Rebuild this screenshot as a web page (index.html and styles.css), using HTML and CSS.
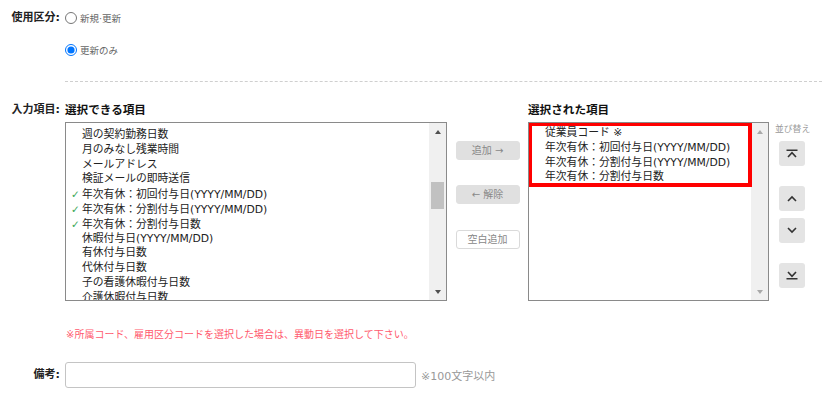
FILE: index.html
```html
<!DOCTYPE html>
<html lang="ja">
<head>
    <meta charset="UTF-8">
    <title>入力項目設定</title>
    <link rel="stylesheet" href="styles.css">
</head>
<body>
    <div class="page">
        <div class="field usage">
            <div class="label">使用区分:</div>
            <div class="options">
                <label class="radio"><input type="radio" name="kubun"> 新規·更新</label>
                <label class="radio"><input type="radio" name="kubun" checked> 更新のみ</label>
            </div>
        </div>

        <div class="dashed"></div>

        <div class="field items">
            <div class="label">入力項目:</div>
            <div class="picker">
                <div class="col col-left">
                    <div class="col-title">選択できる項目</div>
                    <div class="listbox">
                        <ul class="list list-left">
                            <li><span class="mark"></span>週の契約勤務日数</li>
                            <li><span class="mark"></span>月のみなし残業時間</li>
                            <li><span class="mark"></span>メールアドレス</li>
                            <li><span class="mark"></span>検証メールの即時送信</li>
                            <li><span class="mark">✓</span>年次有休：初回付与日(YYYY/MM/DD)</li>
                            <li><span class="mark">✓</span>年次有休：分割付与日(YYYY/MM/DD)</li>
                            <li><span class="mark">✓</span>年次有休：分割付与日数</li>
                            <li><span class="mark"></span>休暇付与日(YYYY/MM/DD)</li>
                            <li><span class="mark"></span>有休付与日数</li>
                            <li><span class="mark"></span>代休付与日数</li>
                            <li><span class="mark"></span>子の看護休暇付与日数</li>
                            <li><span class="mark"></span>介護休暇付与日数</li>
                        </ul>
                        <div class="scrollbar">
                            <span class="arrow up"></span>
                            <div class="track"><div class="thumb"></div></div>
                            <span class="arrow down"></span>
                        </div>
                    </div>
                </div>

                <div class="actions">
                    <button class="btn">追加 →</button>
                    <button class="btn">← 解除</button>
                    <button class="btn btn-white">空白追加</button>
                </div>

                <div class="col col-right">
                    <div class="col-title">選択された項目</div>
                    <div class="listbox">
                        <ul class="list list-right">
                            <li>従業員コード ※</li>
                            <li>年次有休：初回付与日(YYYY/MM/DD)</li>
                            <li>年次有休：分割付与日(YYYY/MM/DD)</li>
                            <li>年次有休：分割付与日数</li>
                        </ul>
                        <div class="scrollbar disabled">
                            <span class="arrow up"></span>
                            <div class="track"></div>
                            <span class="arrow down"></span>
                        </div>
                        <div class="highlight"></div>
                    </div>
                </div>

                <div class="sorter">
                    <div class="sorter-title">並び替え</div>
                    <button class="sort-btn first">
                        <svg width="12" height="9" viewBox="0 0 12 9"><path d="M0.5 1.2H11.5M2 8L6 3.6L10 8" fill="none" stroke="#333" stroke-width="1.6"/></svg>
                    </button>
                    <button class="sort-btn up">
                        <svg width="12" height="7" viewBox="0 0 12 7"><path d="M2 6L6 2L10 6" fill="none" stroke="#333" stroke-width="1.6"/></svg>
                    </button>
                    <button class="sort-btn down">
                        <svg width="12" height="7" viewBox="0 0 12 7"><path d="M2 1L6 5L10 1" fill="none" stroke="#333" stroke-width="1.6"/></svg>
                    </button>
                    <button class="sort-btn last">
                        <svg width="12" height="9" viewBox="0 0 12 9"><path d="M2 1L6 5.4L10 1M0.5 7.8H11.5" fill="none" stroke="#333" stroke-width="1.6"/></svg>
                    </button>
                </div>
            </div>
        </div>

        <p class="note">※所属コード、雇用区分コードを選択した場合は、異動日を選択して下さい。</p>

        <div class="field memo">
            <div class="label">備考:</div>
            <input type="text" class="memo-input">
            <span class="hint">※100文字以内</span>
        </div>
    </div>
</body>
</html>
```

FILE: styles.css
```css
body {
    margin: 0;
    font-family: "DejaVu Sans", "Noto Sans CJK JP", sans-serif;
    color: #222;
    background: #fff;
}
.page {
    padding-top: 11px;
}
.field {
    display: flex;
    align-items: flex-start;
}
.label {
    width: 60px;
    margin-right: 5px;
    text-align: right;
    font-size: 11px;
    font-weight: bold;
    line-height: 14px;
    white-space: nowrap;
    flex-shrink: 0;
}
.options {
    display: flex;
    flex-direction: column;
    gap: 18px;
}
.radio {
    display: flex;
    align-items: center;
    height: 14px;
    font-size: 9.5px;
    color: #666;
}
.radio input {
    width: 12px;
    height: 12px;
    margin: 0 3px 0 0;
}
.dashed {
    margin: 24px 3px 0 65px;
    border-top: 1px dashed #cfcfcf;
}

/* 入力項目 */
.items {
    margin-top: 20px;
}
.items .label {
    line-height: 16px;
}
.picker {
    display: flex;
    align-items: flex-start;
}
.col-title {
    font-size: 11.6px;
    font-weight: bold;
    line-height: 16px;
    margin-bottom: 4px;
    color: #111;
}
.col-left {
    width: 382px;
}
.col-right {
    width: 241px;
}
.listbox {
    position: relative;
    display: flex;
    height: 179px;
    border: 1px solid #8a8a8a;
    box-sizing: border-box;
    overflow: hidden;
    background: #fff;
}
.list {
    flex: 1;
    margin: 0;
    padding: 0;
    list-style: none;
    font-size: 10.8px;
    line-height: 14.8px;
    color: #222;
    white-space: nowrap;
}
.list li {
    height: 14.8px;
}
.list-left {
    padding-top: 5px;
}
.list-right {
    padding-top: 3px;
}
.list-left li {
    padding-left: 5px;
}
.list-right li {
    padding-left: 16px;
}
.mark {
    display: inline-block;
    width: 11px;
    color: #3aa757;
    font-size: 10.5px;
}
.scrollbar {
    display: flex;
    flex-direction: column;
    width: 17px;
    flex-shrink: 0;
    background: #f0f0f0;
}
.arrow {
    height: 17px;
    display: flex;
    align-items: center;
    justify-content: center;
}
.arrow::before {
    content: "";
    border-left: 3.5px solid transparent;
    border-right: 3.5px solid transparent;
}
.arrow.up::before {
    border-bottom: 4px solid #505050;
}
.arrow.down::before {
    border-top: 4px solid #505050;
}
.disabled .arrow.up::before {
    border-bottom-color: #a8a8a8;
}
.disabled .arrow.down::before {
    border-top-color: #a8a8a8;
}
.track {
    flex: 1;
}
.thumb {
    margin: 42px 2px 0;
    height: 27px;
    background: #c1c1c1;
}
.highlight {
    position: absolute;
    left: -1px;
    top: -1px;
    width: 224px;
    height: 65px;
    border: 4px solid #ff0000;
    box-sizing: border-box;
}

/* 追加・解除 */
.actions {
    width: 81px;
    display: flex;
    flex-direction: column;
    align-items: center;
    padding-top: 39px;
}
.btn {
    width: 64px;
    height: 19px;
    padding: 0;
    border: 1px solid #e0e0e0;
    border-radius: 3px;
    background: #e0e0e0;
    color: #888;
    font-family: inherit;
    font-size: 10px;
    line-height: 16px;
    margin-bottom: 25px;
}
.btn-white {
    background: #fff;
    border-color: #dadada;
    margin-top: 1px;
}

/* 並び替え */
.sorter {
    display: flex;
    flex-direction: column;
    padding: 21px 0 0 6px;
}
.sorter-title {
    font-size: 8.8px;
    line-height: 12px;
    color: #999;
    white-space: nowrap;
}
.sort-btn {
    width: 26px;
    height: 25px;
    margin-left: 4px;
    padding: 0;
    border: none;
    border-radius: 3px;
    background: #e4e4e4;
    display: flex;
    align-items: center;
    justify-content: center;
}
.sort-btn.first {
    margin-top: 6px;
}
.sort-btn.up {
    margin-top: 20px;
}
.sort-btn.down {
    margin-top: 7px;
}
.sort-btn.last {
    margin-top: 20px;
}

.note {
    margin: 27px 0 0 66px;
    font-size: 10px;
    line-height: 14px;
    color: #ff5a6e;
}

/* 備考 */
.memo {
    margin-top: 20px;
    align-items: center;
}
.memo .label {
    line-height: 26px;
}
.memo-input {
    width: 351px;
    height: 26px;
    box-sizing: border-box;
    border: 1px solid #c4c4c4;
    border-radius: 3px;
    margin: 0;
}
.hint {
    margin-left: 5px;
    font-size: 11px;
    color: #999;
}
```
